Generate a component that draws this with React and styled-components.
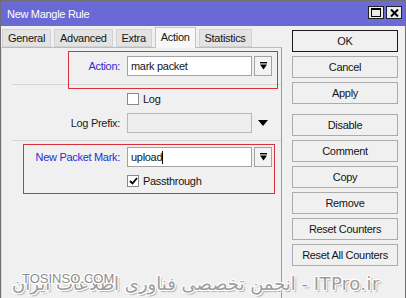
import React from 'react'
import styled, { createGlobalStyle } from 'styled-components'

const Global = createGlobalStyle`
  html, body { margin: 0; padding: 0; background: #f0f0f0; }
  body { font-family: "Liberation Sans", Arial, sans-serif; }
`

const Window = styled.div`
  position: relative;
  width: 404px;
  height: 298px;
  border: 1px solid #707070;
  border-bottom: none;
  background: #f0f0f0;
  overflow: hidden;
  font-size: 11px;
  letter-spacing: -0.3px;
  color: #151515;
`
const TitleBar = styled.div`
  height: 25px;
  background: #6a6ad6;
  display: flex;
  align-items: center;
  justify-content: space-between;
  padding: 0 3px 0 6px;
`
const Title = styled.span`
  color: #fff;
  font-size: 11px;
`
const TitleButtons = styled.div`
  display: flex;
  gap: 2px;
  margin-top: -2px;
`
const TitleBtn = styled.div`
  width: 14px;
  height: 11px;
  border: 1px solid #222;
  background: #ececec;
  display: flex;
  align-items: center;
  justify-content: center;
`
const Body = styled.div`
  display: flex;
  height: 273px;
`
const LeftPane = styled.div`
  width: 281px;
  display: flex;
  flex-direction: column;
`
const TabStrip = styled.div`
  height: 21px;
  display: flex;
  align-items: flex-end;
  gap: 3px;
  padding-left: 1px;
`
const Tab = styled.div`
  position: relative;
  z-index: ${p => (p.$active ? 2 : 1)};
  height: ${p => (p.$active ? '21px' : '18px')};
  margin-bottom: ${p => (p.$active ? '-1px' : '0')};
  padding: 0 5px;
  display: flex;
  align-items: center;
  padding-bottom: ${p => (p.$active ? '2px' : '0')};
  box-sizing: border-box;
  background: ${p => (p.$active ? '#f7f7f7' : '#e3e3e3')};
  border: 1px solid ${p => (p.$active ? '#c4c4c4' : '#d2d2d2')};
  border-bottom: ${p => (p.$active ? 'none' : '1px solid #d2d2d2')};
`
const Panel = styled.div`
  position: relative;
  flex: 1;
  border-top: 1px solid #bcbcbc;
  border-right: 1px solid #9c9c9c;
  border-left: 1px solid #dadada;
  padding-top: 8px;
  box-sizing: border-box;
`
const Row = styled.div`
  display: flex;
  align-items: center;
  height: 20px;
  margin-top: ${p => p.$mt || 0}px;
`
const Label = styled.span`
  width: 118px;
  margin-right: 7px;
  text-align: right;
  color: ${p => (p.$blue ? '#2c2cd0' : '#1e1e1e')};
`
const Field = styled.div`
  width: 125px;
  height: 20px;
  box-sizing: border-box;
  border: 1px solid ${p => (p.$disabled ? '#b8b8b8' : '#a3a3a3')};
  background: ${p => (p.$disabled ? '#eeeeee' : '#fff')};
  display: flex;
  align-items: center;
  padding-left: 3px;
  font-size: 11px;
`
const Caret = styled.span`
  display: inline-block;
  width: 1px;
  height: 13px;
  background: #000;
`
const DropBtn = styled.div`
  width: 18px;
  height: 20px;
  margin-left: 2px;
  box-sizing: border-box;
  border: 1px solid #a3a3a3;
  background: #f3f3f3;
  display: flex;
  align-items: center;
  justify-content: center;
`
const PlainArrow = styled.div`
  margin-left: 6px;
  display: flex;
  align-items: center;
`
const Separator = styled.div`
  height: 1px;
  background: #d6d6d6;
  margin: ${p => p.$mt}px 0 0 10px;
`
const CheckRow = styled.label`
  display: flex;
  align-items: center;
  height: 13px;
  margin-top: ${p => p.$mt}px;
  padding-left: 125px;
  gap: 4px;
`
const Box = styled.span`
  width: 12px;
  height: 12px;
  box-sizing: border-box;
  border: 1px solid #8a8a8a;
  background: #fff;
  display: flex;
  align-items: center;
  justify-content: center;
`
const Marker = styled.div`
  position: absolute;
  left: ${p => p.$left}px;
  top: ${p => p.$top}px;
  width: ${p => p.$w}px;
  height: ${p => p.$h}px;
  box-sizing: border-box;
  border: 1px solid #d8303a;
  pointer-events: none;
`
const ButtonColumn = styled.div`
  display: flex;
  flex-direction: column;
  padding: 4px 0 0 10px;
  gap: 4px;
`
const Button = styled.div`
  width: 106px;
  height: 22px;
  box-sizing: border-box;
  border: 1px solid ${p => (p.$default ? '#1a1a1a' : '#acacac')};
  background: #f0f0f0;
  display: flex;
  align-items: center;
  justify-content: center;
  margin-top: ${p => (p.$gapBefore ? '6px' : '0')};
`
const Watermark = styled.div`
  position: absolute;
  left: 11px;
  top: 272px;
  white-space: nowrap;
  font-family: "DejaVu Sans", sans-serif;
  font-size: 18px;
  letter-spacing: 0;
  color: #9c9c9c;
  text-shadow: -1px -1px 0 #fff, 1px 1px 0 #fff, 1px -1px 0 #fff, -1px 1px 0 #fff, 2px 2px 1px rgba(0,0,0,0.25);
`
const Latin = styled.span`
  letter-spacing: 0.4px;
`
const Brand = styled.div`
  position: absolute;
  left: 21px;
  top: 270px;
  font-family: "Liberation Sans", Arial, sans-serif;
  font-size: 13px;
  letter-spacing: 0;
  color: #8e8e8e;
  text-shadow: -1px -1px 0 #fff, 1px 1px 0 #fff, 1px -1px 0 #fff, -1px 1px 0 #fff;
`

const DropIcon = () => (
  <svg width="7" height="8" viewBox="0 0 7 8">
    <rect x="0" y="0" width="7" height="1.4" fill="#000" />
    <path d="M0 2.6 H7 L3.5 7.5 Z" fill="#000" />
  </svg>
)

const tabs = ['General', 'Advanced', 'Extra', 'Action', 'Statistics']
const buttons = ['OK', 'Cancel', 'Apply', 'Disable', 'Comment', 'Copy', 'Remove', 'Reset Counters', 'Reset All Counters']

export default function App() {
  return (
    <Window>
      <Global />
      <TitleBar>
        <Title>New Mangle Rule</Title>
        <TitleButtons>
          <TitleBtn>
            <svg width="10" height="9" viewBox="0 0 10 9">
              <rect x="0.5" y="0.5" width="9" height="8" fill="none" stroke="#000" />
              <rect x="0" y="0" width="10" height="2" fill="#000" />
            </svg>
          </TitleBtn>
          <TitleBtn>
            <svg width="9" height="8" viewBox="0 0 9 8">
              <path d="M1 0.5 L8 7.5 M8 0.5 L1 7.5" stroke="#000" strokeWidth="2" />
            </svg>
          </TitleBtn>
        </TitleButtons>
      </TitleBar>
      <Body>
        <LeftPane>
          <TabStrip>
            {tabs.map(t => (
              <Tab key={t} $active={t === 'Action'}>{t}</Tab>
            ))}
          </TabStrip>
          <Panel>
            <Row>
              <Label $blue>Action:</Label>
              <Field>mark packet</Field>
              <DropBtn><DropIcon /></DropBtn>
            </Row>
            <Separator $mt={8} />
            <CheckRow $mt={7}>
              <Box />
              <span>Log</span>
            </CheckRow>
            <Row $mt={8}>
              <Label>Log Prefix:</Label>
              <Field $disabled />
              <PlainArrow>
                <svg width="10" height="6" viewBox="0 0 10 6"><path d="M0 0 H10 L5 6 Z" fill="#000" /></svg>
              </PlainArrow>
            </Row>
            <Separator $mt={7} />
            <Row $mt={6}>
              <Label $blue>New Packet Mark:</Label>
              <Field>upload<Caret /></Field>
              <DropBtn><DropIcon /></DropBtn>
            </Row>
            <CheckRow $mt={7}>
              <Box>
                <svg width="9" height="8" viewBox="0 0 9 8">
                  <path d="M1 4 L3.5 6.5 L8 1" fill="none" stroke="#000" strokeWidth="1.8" />
                </svg>
              </Box>
              <span>Passthrough</span>
            </CheckRow>
            <Marker $left={66} $top={3} $w={210} $h={38} />
            <Marker $left={21} $top={96} $w={252} $h={50} />
          </Panel>
        </LeftPane>
        <ButtonColumn>
          {buttons.map(b => (
            <Button key={b} $default={b === 'OK'} $gapBefore={b === 'Disable'}>{b}</Button>
          ))}
        </ButtonColumn>
      </Body>
      <Watermark>
        انجمن تخصصی فناوری اطلاعات ایران - <Latin>ITPro.ir</Latin>
      </Watermark>
      <Brand>TOSINSO.COM</Brand>
    </Window>
  )
}
